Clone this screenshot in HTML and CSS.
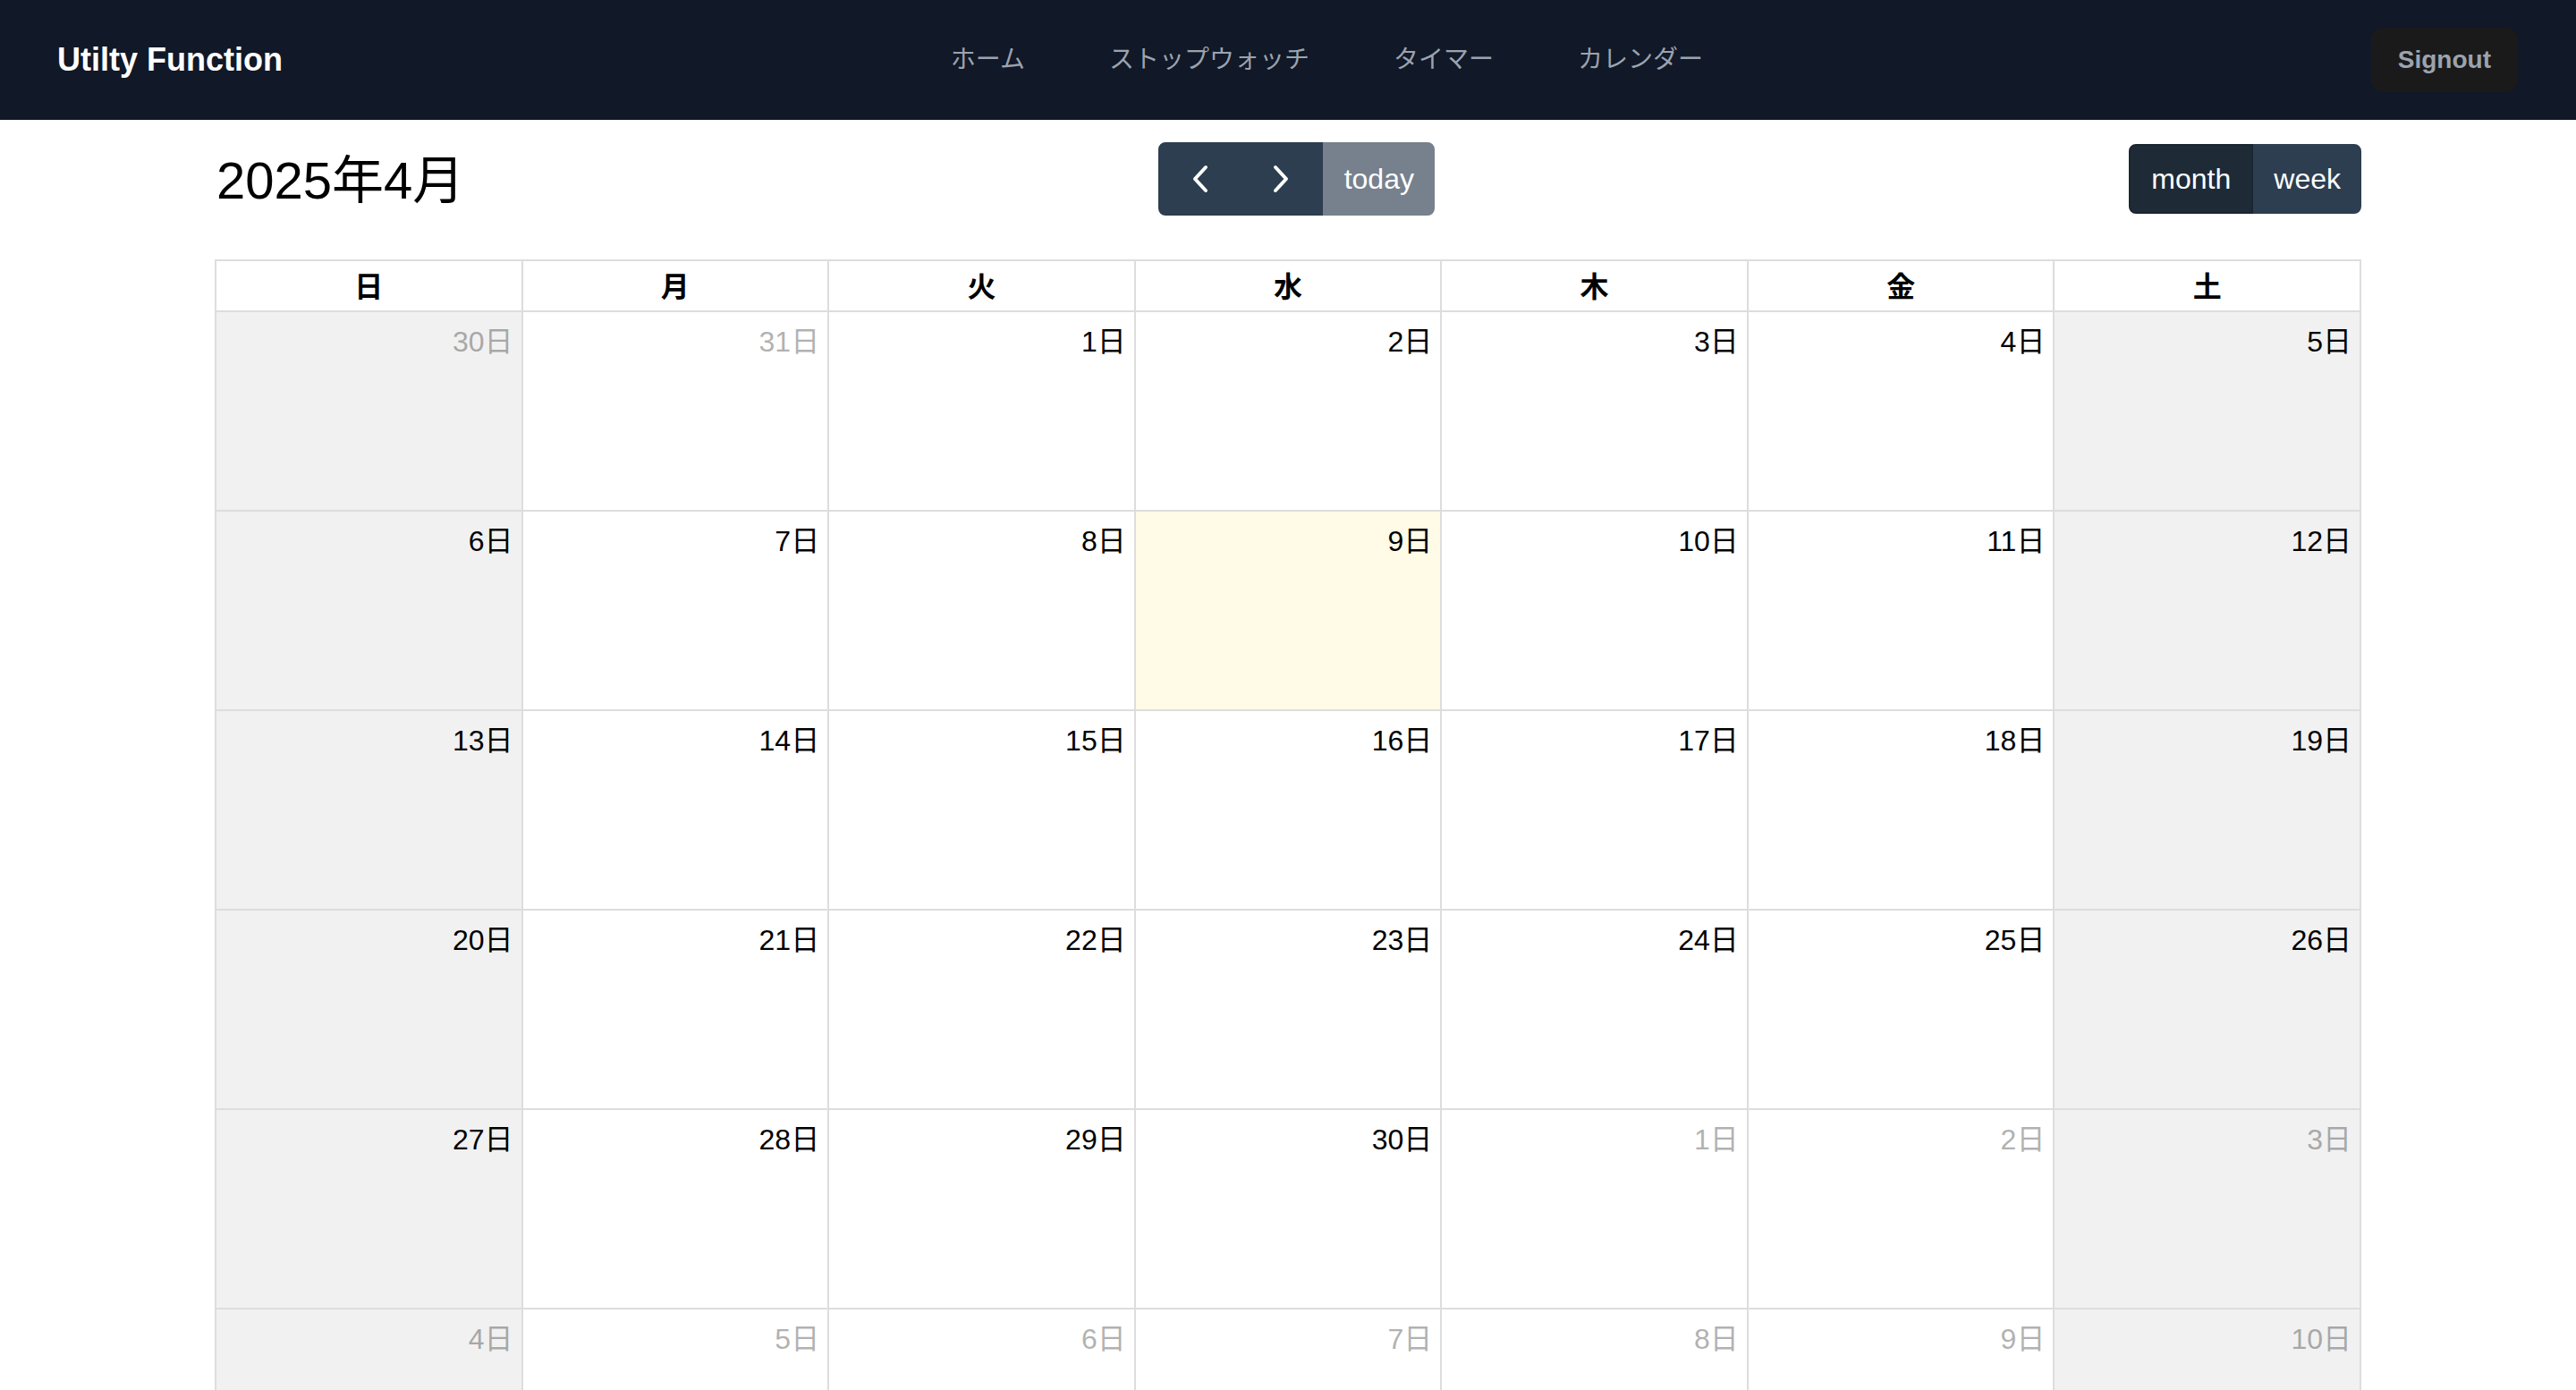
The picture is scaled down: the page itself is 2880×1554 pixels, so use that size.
FILE: index.html
```html
<!DOCTYPE html>
<html lang="ja">
<head>
<meta charset="utf-8">
<title>Utilty Function</title>
<link rel="stylesheet" href="styles.css">
</head>
<body>
<header class="navbar">
  <div class="logo">Utilty Function</div>
  <nav class="nav">
    <a class="nav-link" href="#">ホーム</a>
    <a class="nav-link" href="#">ストップウォッチ</a>
    <a class="nav-link" href="#">タイマー</a>
    <a class="nav-link" href="#">カレンダー</a>
  </nav>
  <button class="signout">Signout</button>
</header>
<main class="main">
  <div class="toolbar">
    <h2 class="title">2025年4月</h2>
    <div class="btn-group">
      <button class="btn btn-icon first" aria-label="prev"><svg width="48" height="48" viewBox="0 0 48 48"><polyline points="31,11 19,24 31,37" fill="none" stroke="#fff" stroke-width="4" stroke-linecap="round" stroke-linejoin="round"/></svg></button>
      <button class="btn btn-icon" aria-label="next"><svg width="48" height="48" viewBox="0 0 48 48"><polyline points="17,11 29,24 17,37" fill="none" stroke="#fff" stroke-width="4" stroke-linecap="round" stroke-linejoin="round"/></svg></button>
      <button class="btn btn-disabled last">today</button>
    </div>
    <div class="btn-group">
      <button class="btn btn-active first btn-month">month</button>
      <button class="btn last">week</button>
    </div>
  </div>
  <div class="grid">
    <div class="head">日</div><div class="head">月</div><div class="head">火</div><div class="head">水</div><div class="head">木</div><div class="head">金</div><div class="head">土</div>

    <div class="day weekend other"><span class="num">30日</span></div>
    <div class="day other"><span class="num">31日</span></div>
    <div class="day"><span class="num">1日</span></div>
    <div class="day"><span class="num">2日</span></div>
    <div class="day"><span class="num">3日</span></div>
    <div class="day"><span class="num">4日</span></div>
    <div class="day weekend"><span class="num">5日</span></div>

    <div class="day weekend"><span class="num">6日</span></div>
    <div class="day"><span class="num">7日</span></div>
    <div class="day"><span class="num">8日</span></div>
    <div class="day today"><span class="num">9日</span></div>
    <div class="day"><span class="num">10日</span></div>
    <div class="day"><span class="num">11日</span></div>
    <div class="day weekend"><span class="num">12日</span></div>

    <div class="day weekend"><span class="num">13日</span></div>
    <div class="day"><span class="num">14日</span></div>
    <div class="day"><span class="num">15日</span></div>
    <div class="day"><span class="num">16日</span></div>
    <div class="day"><span class="num">17日</span></div>
    <div class="day"><span class="num">18日</span></div>
    <div class="day weekend"><span class="num">19日</span></div>

    <div class="day weekend"><span class="num">20日</span></div>
    <div class="day"><span class="num">21日</span></div>
    <div class="day"><span class="num">22日</span></div>
    <div class="day"><span class="num">23日</span></div>
    <div class="day"><span class="num">24日</span></div>
    <div class="day"><span class="num">25日</span></div>
    <div class="day weekend"><span class="num">26日</span></div>

    <div class="day weekend"><span class="num">27日</span></div>
    <div class="day"><span class="num">28日</span></div>
    <div class="day"><span class="num">29日</span></div>
    <div class="day"><span class="num">30日</span></div>
    <div class="day other"><span class="num">1日</span></div>
    <div class="day other"><span class="num">2日</span></div>
    <div class="day weekend other"><span class="num">3日</span></div>

    <div class="day weekend other"><span class="num">4日</span></div>
    <div class="day other"><span class="num">5日</span></div>
    <div class="day other"><span class="num">6日</span></div>
    <div class="day other"><span class="num">7日</span></div>
    <div class="day other"><span class="num">8日</span></div>
    <div class="day other"><span class="num">9日</span></div>
    <div class="day weekend other"><span class="num">10日</span></div>
  </div>
</main>
</body>
</html>
```
FILE: styles.css
```css
* { box-sizing: border-box; }
html, body { margin: 0; padding: 0; }
body {
  font-family: "Liberation Sans", "Noto Sans CJK JP", sans-serif;
  color: #000;
  background: #fff;
}

.navbar {
  height: 134px;
  background: #111827;
  display: flex;
  align-items: center;
  justify-content: space-between;
  padding: 0 65px 0 64px;
}
.logo {
  color: #fff;
  font-size: 36px;
  font-weight: 700;
}
.nav {
  display: flex;
  gap: 94px;
  padding-bottom: 6px;
}
.nav-link {
  color: #9ca3af;
  font-size: 28px;
  font-family: "Noto Sans CJK JP", sans-serif;
  text-decoration: none;
}
.signout {
  background: #1a1a1a;
  color: #9ca3af;
  font-family: "Liberation Sans", sans-serif;
  font-size: 28px;
  font-weight: 600;
  line-height: 40px;
  padding: 16px 30px;
  border: none;
  border-radius: 14px;
}

.main {
  width: 2400px;
  margin: 0 auto;
  padding-top: 25px;
}
.toolbar {
  display: flex;
  justify-content: space-between;
  align-items: center;
  margin-bottom: 49px;
}
.title {
  font-size: 58px;
  font-weight: 400;
  margin: -6px 0 0;
  padding-left: 2px;
}
.btn-group {
  display: flex;
}
.btn {
  font-family: "Liberation Sans", sans-serif;
  font-size: 32px;
  line-height: 48px;
  padding: 13px 21px;
  border: 2px solid #2c3e50;
  background: #2c3e50;
  color: #fff;
  border-radius: 0;
}
.btn.first { border-radius: 8px 0 0 8px; }
.btn.last { border-radius: 0 8px 8px 0; }
.btn-icon {
  display: flex;
  align-items: center;
  justify-content: center;
  height: 82px;
  width: 92px;
  padding: 0;
}
.btn-icon svg { display: block; }
.btn-disabled {
  height: 82px;
  width: 125px;
  padding: 0;
  background: #76818d;
  border-color: #76818d;
}
.btn-active {
  background: #1e2b37;
  border-color: #1a252f;
}
.btn-month { width: 139px; padding: 0; }

.grid {
  display: grid;
  grid-template-columns: repeat(7, 1fr);
  border-top: 2px solid #ddd;
  border-left: 2px solid #ddd;
}
.head {
  border-right: 2px solid #ddd;
  border-bottom: 2px solid #ddd;
  text-align: center;
  font-weight: 700;
  font-size: 32px;
  line-height: 48px;
  padding: 5px 4px 2px;
}
.day {
  height: 223px;
  border-right: 2px solid #ddd;
  border-bottom: 2px solid #ddd;
  text-align: right;
  padding: 9px 9px 0;
  font-size: 32px;
  line-height: 48px;
}
.day.weekend { background: #f1f1f1; }
.day.today { background: #fffbe6; }
.day.other .num { opacity: 0.3; }
```
